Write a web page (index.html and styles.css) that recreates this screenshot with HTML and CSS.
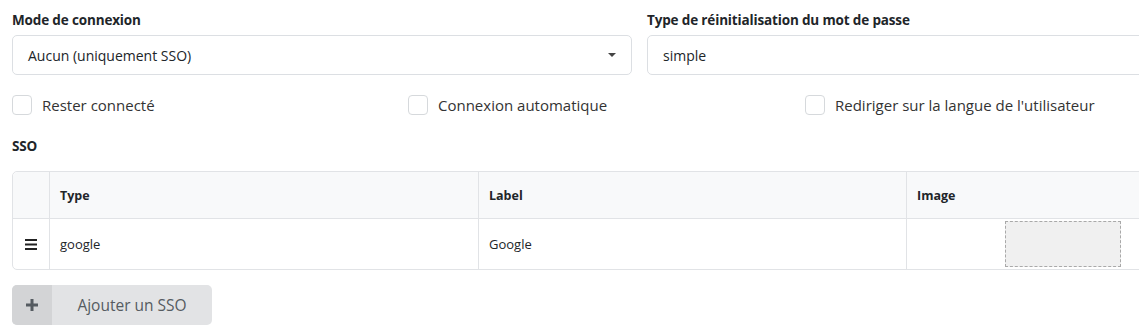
FILE: index.html
```html
<!DOCTYPE html>
<html lang="fr">
<head>
    <meta charset="UTF-8">
    <title>Connexion</title>
    <link rel="stylesheet" href="styles.css">
</head>
<body>
    <div class="page">
        <div class="row-two">
            <div class="field">
                <label class="field-label">Mode de connexion</label>
                <div class="select">
                    <span>Aucun (uniquement SSO)</span>
                    <span class="caret"></span>
                </div>
            </div>
            <div class="field">
                <label class="field-label">Type de réinitialisation du mot de passe</label>
                <div class="select">
                    <span>simple</span>
                </div>
            </div>
        </div>

        <div class="checks">
            <label class="check"><span class="box"></span>Rester connecté</label>
            <label class="check"><span class="box"></span>Connexion automatique</label>
            <label class="check"><span class="box"></span>Rediriger sur la langue de l'utilisateur</label>
        </div>

        <div class="field-label sso-title">SSO</div>

        <table class="sso-table">
            <thead>
                <tr>
                    <th class="col-drag"></th>
                    <th class="col-type">Type</th>
                    <th class="col-label">Label</th>
                    <th class="col-image">Image</th>
                </tr>
            </thead>
            <tbody>
                <tr>
                    <td class="col-drag">
                        <svg class="drag-icon" width="12" height="11" viewBox="0 0 12 11">
                            <rect x="0" y="0" width="12" height="2" fill="#222"/>
                            <rect x="0" y="4.5" width="12" height="2" fill="#222"/>
                            <rect x="0" y="9" width="12" height="2" fill="#222"/>
                        </svg>
                    </td>
                    <td>google</td>
                    <td>Google</td>
                    <td class="image-cell"><div class="image-drop"></div></td>
                </tr>
            </tbody>
        </table>

        <button class="add-btn">
            <span class="add-icon">
                <svg width="12" height="12" viewBox="0 0 12 12">
                    <rect x="4.5" y="0" width="3" height="12" fill="#555b61"/>
                    <rect x="0" y="4.5" width="12" height="3" fill="#555b61"/>
                </svg>
            </span>
            <span class="add-text">Ajouter un SSO</span>
        </button>
    </div>
</body>
</html>
```

FILE: styles.css
```css
body {
    font-family: "Open Sans", "Noto Sans", sans-serif;
    color: #212529;
    background: #fff;
    margin: 0;
    overflow: hidden;
}
.page {
    width: 1254px;
    padding: 10px 12px;
}
.row-two {
    display: grid;
    grid-template-columns: 620px 620px;
    gap: 15px;
}
.field-label {
    display: block;
    font-size: 13.5px;
    font-weight: 700;
    line-height: 20px;
    margin-bottom: 5px;
    letter-spacing: -0.15px;
}
.select {
    height: 40px;
    box-sizing: border-box;
    border: 1px solid #dcdfe3;
    border-radius: 5px;
    padding: 0 15px;
    display: flex;
    align-items: center;
    justify-content: space-between;
    font-size: 14px;
}
.caret {
    width: 0;
    height: 0;
    border-left: 4px solid transparent;
    border-right: 4px solid transparent;
    border-top: 4px solid #444;
}
.checks {
    display: grid;
    grid-template-columns: 396px 397px auto;
    margin-top: 20px;
    height: 20px;
}
.check {
    display: flex;
    align-items: center;
    font-size: 15px;
    color: #333;
}
.box {
    width: 18px;
    height: 18px;
    border: 1px solid #d6d9dc;
    border-radius: 4px;
    margin-right: 10px;
}
.sso-title {
    margin-top: 21px;
    margin-bottom: 15px;
}
.sso-table {
    width: 1208px;
    border-collapse: separate;
    border-spacing: 0;
    border: 1px solid #e1e3e6;
    border-radius: 5px;
    font-size: 13px;
}
.sso-table th {
    background: #f8f9fa;
    text-align: left;
    font-weight: 700;
    font-size: 12.5px;
    height: 46px;
    padding: 0 10px;
    border-bottom: 1px solid #e1e3e6;
    border-left: 1px solid #e1e3e6;
}
.sso-table th:first-child {
    border-top-left-radius: 5px;
}
.sso-table td {
    height: 46px;
    padding: 2px 10px;
    border-left: 1px solid #e1e3e6;
}
.sso-table th:first-child,
.sso-table td:first-child {
    border-left: none;
}
.col-drag {
    width: 16px;
    text-align: center;
}
.drag-icon {
    display: block;
    margin: 0 auto;
}
.col-type {
    width: 408px;
}
.col-label {
    width: 407px;
}
.sso-table td.image-cell {
    padding: 2px 0;
}
.image-drop {
    width: 114px;
    height: 44px;
    margin: 0 auto;
    background: #f0f0f0;
    border: 1px dashed #a9a9a9;
}
.add-btn {
    margin-top: 15px;
    display: flex;
    height: 40px;
    width: 200px;
    padding: 0;
    border: none;
    border-radius: 5px;
    overflow: hidden;
    background: #e2e3e5;
    font-family: inherit;
    color: #555b61;
    cursor: pointer;
}
.add-icon {
    width: 40px;
    background: #d3d4d6;
    display: flex;
    align-items: center;
    justify-content: center;
}
.add-text {
    flex: 1;
    display: flex;
    align-items: center;
    justify-content: center;
    font-size: 15.5px;
}
```
